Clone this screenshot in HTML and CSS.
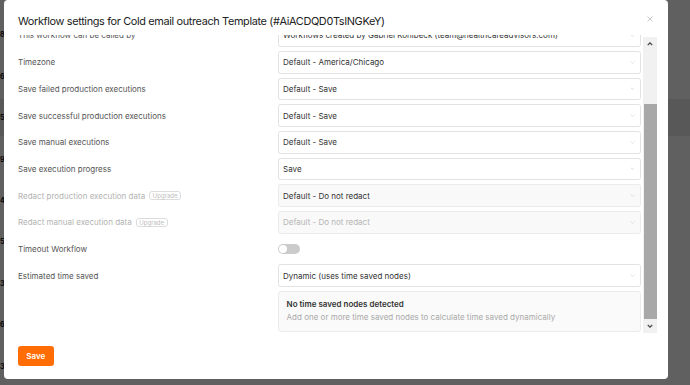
FILE: index.html
```html
<!DOCTYPE html>
<html>
<head>
<meta charset="utf-8">
<link rel="stylesheet" href="styles.css">
</head>
<body>
<div class="page-behind">
  <div class="bg-item"><b>8</b></div>
  <div class="bg-item"><b>6</b></div>
  <div class="bg-item band"><b>5</b></div>
  <div class="bg-item"><b>9</b></div>
  <div class="bg-item"><b>4</b></div>
  <div class="bg-item"><b>5</b></div>
  <div class="bg-item"><b>3</b></div>
  <div class="bg-item"><b>6</b></div>
  <div class="bg-item"><b>3</b></div>
</div>
<div class="overlay"></div>

<div class="modal">
  <div class="modal-header">
    <h1 class="title">Workflow settings for Cold email outreach Template (#AiACDQD0TsINGKeY)</h1>
    <button class="close" aria-label="Close">
      <svg viewBox="0 0 6 6" width="6" height="6"><path d="M0.5 0.5 L5.5 5.5 M5.5 0.5 L0.5 5.5" stroke="#bcbcbc" stroke-width="0.8" fill="none"/></svg>
    </button>
  </div>

  <div class="body">
    <div class="scroll">
      <div class="rows">
        <div class="row">
          <div class="label">Error Workflow (to notify when this one errors)</div>
          <div class="select"><span>- No Workflow -</span><svg class="chev" viewBox="0 0 8 5"><path d="M1 1 L4 4 L7 1"/></svg></div>
        </div>
        <div class="row">
          <div class="label">This workflow can be called by</div>
          <div class="select"><span>Workflows created by Gabriel Kohlbeck (team@healthcareadvisors.com)</span><svg class="chev" viewBox="0 0 8 5"><path d="M1 1 L4 4 L7 1"/></svg></div>
        </div>
        <div class="row">
          <div class="label">Timezone</div>
          <div class="select"><span>Default - America/Chicago</span><svg class="chev" viewBox="0 0 8 5"><path d="M1 1 L4 4 L7 1"/></svg></div>
        </div>
        <div class="row">
          <div class="label">Save failed production executions</div>
          <div class="select"><span>Default - Save</span><svg class="chev" viewBox="0 0 8 5"><path d="M1 1 L4 4 L7 1"/></svg></div>
        </div>
        <div class="row">
          <div class="label">Save successful production executions</div>
          <div class="select"><span>Default - Save</span><svg class="chev" viewBox="0 0 8 5"><path d="M1 1 L4 4 L7 1"/></svg></div>
        </div>
        <div class="row">
          <div class="label">Save manual executions</div>
          <div class="select"><span>Default - Save</span><svg class="chev" viewBox="0 0 8 5"><path d="M1 1 L4 4 L7 1"/></svg></div>
        </div>
        <div class="row">
          <div class="label">Save execution progress</div>
          <div class="select"><span>Save</span><svg class="chev" viewBox="0 0 8 5"><path d="M1 1 L4 4 L7 1"/></svg></div>
        </div>
        <div class="row">
          <div class="label muted">Redact production execution data <span class="badge">Upgrade</span></div>
          <div class="select grey"><span>Default - Do not redact</span><svg class="chev" viewBox="0 0 8 5"><path d="M1 1 L4 4 L7 1"/></svg></div>
        </div>
        <div class="row">
          <div class="label muted">Redact manual execution data <span class="badge">Upgrade</span></div>
          <div class="select grey disabled"><span>Default - Do not redact</span><svg class="chev" viewBox="0 0 8 5"><path d="M1 1 L4 4 L7 1"/></svg></div>
        </div>
        <div class="row">
          <div class="label">Timeout Workflow</div>
          <div class="switch-cell"><div class="switch"><div class="knob"></div></div></div>
        </div>
        <div class="row">
          <div class="label">Estimated time saved</div>
          <div class="select"><span>Dynamic (uses time saved nodes)</span><svg class="chev" viewBox="0 0 8 5"><path d="M1 1 L4 4 L7 1"/></svg></div>
        </div>
        <div class="row info-row">
          <div></div>
          <div class="info">
            <div class="info-title">No time saved nodes detected</div>
            <div class="info-desc">Add one or more time saved nodes to calculate time saved dynamically</div>
          </div>
        </div>
      </div>
    </div>
    <div class="scrollbar">
      <div class="sb-btn sb-up"><svg viewBox="0 0 8 5" width="6" height="4"><path d="M1 4 L4 1 L7 4"/></svg></div>
      <div class="sb-track"><div class="sb-thumb"></div></div>
      <div class="sb-btn sb-down"><svg viewBox="0 0 8 5" width="6" height="4"><path d="M1 1 L4 4 L7 1"/></svg></div>
    </div>
  </div>

  <div class="footer">
    <button class="save">Save</button>
  </div>
</div>
</body>
</html>
```
FILE: styles.css
```css
* { box-sizing: border-box; }

html, body { margin: 0; }

body {
  width: 690px;
  height: 385px;
  overflow: hidden;
  position: relative;
  background: #ffffff;
  font-family: Inter, "Noto Sans", sans-serif;
  display: flex;
  align-items: flex-start;
  padding-left: 4px;
}

/* page behind the modal */
.page-behind {
  position: absolute;
  inset: 0;
  padding-top: 16px;
  display: flex;
  flex-direction: column;
  gap: 4px;
  background: #fbfbfb;
}
.bg-item {
  height: 38px;
  display: flex;
  flex-direction: column;
  justify-content: center;
}
.bg-item b { font-size: 7px; line-height: 9px; color: #111; }
.bg-item.band { background: #e6e6e6; }

.overlay {
  position: absolute;
  inset: 0;
  background: rgba(0, 0, 0, 0.62);
}

/* modal */
.modal {
  position: relative;
  z-index: 2;
  width: 664px;
  height: 379px;
  background: #ffffff;
  border-radius: 4px;
  display: flex;
  flex-direction: column;
  padding: 0 11px 0 14px;
}

.modal-header {
  height: 35px;
  padding-top: 14px;
  display: flex;
  justify-content: space-between;
  align-items: flex-start;
}
.title {
  margin: 0;
  font-size: 10.9px;
  letter-spacing: -0.35px;
  line-height: 14px;
  font-weight: 400;
  color: #222;
  white-space: nowrap;
}
.close {
  border: 0;
  background: none;
  padding: 0;
  margin: 1.5px 4.5px 0 0;
  width: 6px;
  height: 6px;
  display: flex;
}

.body {
  display: flex;
  height: 298px;
}

.scroll {
  flex: 1;
  min-width: 0;
  overflow: hidden;
  display: flex;
  flex-direction: column;
  justify-content: flex-end;
}
.rows {
  flex-shrink: 0;
  display: flex;
  flex-direction: column;
  gap: 4px;
  padding-bottom: 0.7px;
}
.row {
  display: grid;
  grid-template-columns: 10fr 14fr;
  height: 22.7px;
  align-items: center;
}
.label {
  font-size: 8px;
  line-height: 10px;
  color: #555;
  display: flex;
  align-items: center;
  gap: 4px;
  white-space: nowrap;
}
.label.muted { color: #b3b3b3; }
.badge {
  font-size: 6px;
  line-height: 7.5px;
  height: 9.5px;
  padding: 0 2.7px;
  border: 1px solid #dcdcdc;
  border-radius: 3px;
  color: #bdbdbd;
  display: inline-flex;
  align-items: center;
}

.select {
  height: 100%;
  min-width: 0;
  border: 1px solid #e2e2e2;
  border-radius: 2.5px;
  background: #ffffff;
  display: flex;
  align-items: center;
  justify-content: space-between;
  padding: 0 5.5px 0 4.5px;
  font-size: 8px;
  line-height: 10px;
  color: #333;
}
.select span { white-space: nowrap; overflow: hidden; }
.select.grey { background: #f9f9f9; border-color: #ebebeb; }
.select.disabled { color: #b5b5b5; }
.chev {
  width: 5px;
  height: 3px;
  flex-shrink: 0;
  fill: none;
  stroke: #c6c6c6;
  stroke-width: 0.9;
}

.switch-cell { display: flex; align-items: center; }
.switch {
  width: 22px;
  height: 10px;
  border-radius: 5px;
  background: #cbcbcb;
  padding: 1px;
  display: flex;
}
.knob {
  width: 8px;
  height: 8px;
  border-radius: 50%;
  background: #ffffff;
}

.info-row { height: 41.3px; align-items: stretch; }
.info {
  background: #fafafa;
  border: 1px solid #ebebeb;
  border-radius: 3px;
  padding: 6px 8px 0;
  font-size: 8px;
  line-height: 12.5px;
}
.info-title { font-weight: 600; color: #333; }
.info-desc { color: #a9a9a9; }

/* scrollbar */
.scrollbar {
  width: 14.4px;
  margin-left: 1.6px;
  margin-top: 1.7px;
  display: flex;
  flex-direction: column;
  background: #f1f1f1;
}
.sb-btn {
  display: flex;
  align-items: center;
  justify-content: center;
}
.sb-btn svg { fill: none; stroke: #4a4a4a; stroke-width: 1.8; }
.sb-up { height: 15px; }
.sb-down { height: 14px; }
.sb-track {
  flex: 1;
  display: flex;
  flex-direction: column;
  justify-content: flex-end;
}
.sb-thumb {
  height: 214.7px;
  margin-left: 1px;
  background: #a8a8a8;
}

.footer {
  margin-top: 13px;
  display: flex;
}
.save {
  width: 35.7px;
  height: 20px;
  border: 0;
  border-radius: 3px;
  background: #ff6d04;
  color: #ffffff;
  font-family: Inter, "Noto Sans", sans-serif;
  font-size: 8px;
  font-weight: 600;
  padding: 0;
}
```
